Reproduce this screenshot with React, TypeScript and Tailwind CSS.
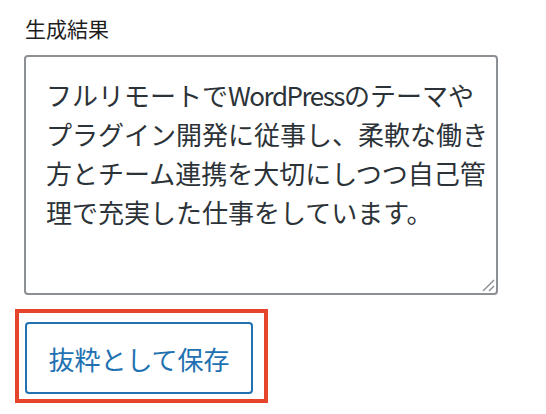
import React from "react";

const lines: React.ReactNode[] = [
  <>
    フルリモートで<span className="tracking-[-1.5px]">WordPress</span>のテーマや
  </>,
  "プラグイン開発に従事し、柔軟な働き",
  "方とチーム連携を大切にしつつ自己管",
  "理で充実した仕事をしています。",
];

export default function App() {
  return (
    <div
      className="min-h-[414px] w-[546px] bg-white pl-[24px] pt-[13px]"
      style={{ fontFamily: '"Noto Sans CJK JP", "Noto Sans", sans-serif' }}
    >
      <label className="block pl-[1px] text-[21px] leading-[31px] text-[#1e1e1e]">生成結果</label>
      <div
        role="textbox"
        className="relative mt-[11px] h-[240px] w-[474px] rounded-[4px] border-2 border-[#8c8f94] bg-white px-[20px] py-[18px] text-[26px] leading-[39px] text-[#2c3338]"
      >
        {lines.map((l, i) => (
          <div key={i} className="whitespace-nowrap">
            {l}
          </div>
        ))}
        <svg
          className="absolute bottom-[1px] right-[1px]"
          width="14"
          height="14"
          viewBox="0 0 14 14"
        >
          <line x1="2" y1="13" x2="13" y2="2" stroke="#8c8f94" strokeWidth="1.5" />
          <line x1="8" y1="13" x2="13" y2="8" stroke="#8c8f94" strokeWidth="1.5" />
        </svg>
      </div>
      <div className="ml-[-9px] mt-[14px] inline-block border-[4px] border-[#e5462b] pb-[5px] pl-[6px] pr-[11px] pt-[9px]">
        <button className="flex h-[72px] w-[228px] items-center justify-center rounded-[4px] border-2 border-[#2271b1] bg-white text-[26px] text-[#2271b1]">
          抜粋として保存
        </button>
      </div>
    </div>
  );
}
